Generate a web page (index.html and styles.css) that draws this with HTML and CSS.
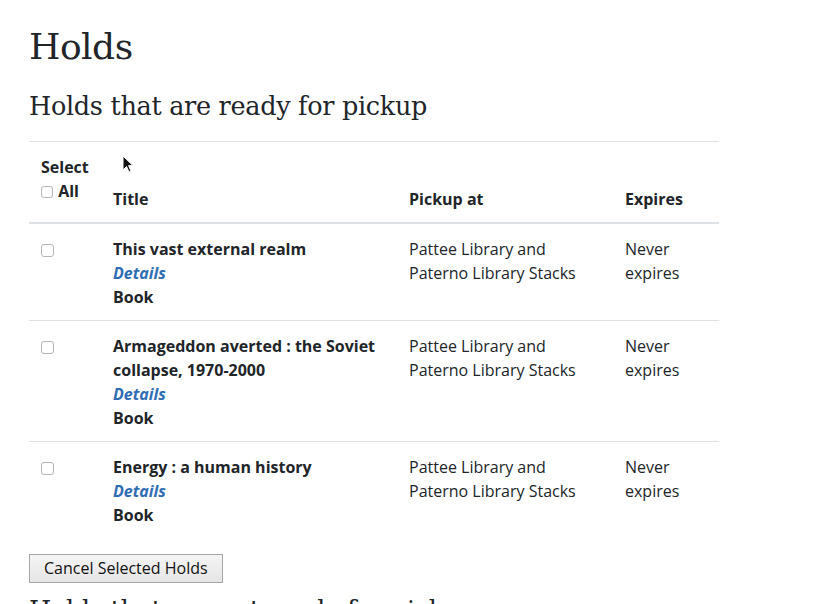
FILE: index.html
```html
<!DOCTYPE html>
<html lang="en">
<head>
<meta charset="utf-8">
<title>Holds</title>
<link rel="stylesheet" href="styles.css">
</head>
<body>
<main class="page">
  <h1 class="title">Holds</h1>
  <h2 class="subtitle">Holds that are ready for pickup</h2>
  <table class="holds">
    <colgroup>
      <col class="c-sel"><col class="c-title"><col class="c-pick"><col class="c-exp">
    </colgroup>
    <thead>
      <tr>
        <th class="th-select">Select<br><label class="all"><input type="checkbox" class="cb cb-all"> All</label></th>
        <th>Title</th>
        <th>Pickup at</th>
        <th>Expires</th>
      </tr>
    </thead>
    <tbody>
      <tr>
        <td><input type="checkbox" class="cb"></td>
        <td><strong>This vast external realm</strong><br><a class="details" href="#">Details</a><br><strong>Book</strong></td>
        <td>Pattee Library and Paterno Library Stacks</td>
        <td>Never expires</td>
      </tr>
      <tr>
        <td><input type="checkbox" class="cb"></td>
        <td><strong>Armageddon averted : the Soviet collapse, 1970-2000</strong><br><a class="details" href="#">Details</a><br><strong>Book</strong></td>
        <td>Pattee Library and Paterno Library Stacks</td>
        <td>Never expires</td>
      </tr>
      <tr>
        <td><input type="checkbox" class="cb"></td>
        <td><strong>Energy : a human history</strong><br><a class="details" href="#">Details</a><br><strong>Book</strong></td>
        <td>Pattee Library and Paterno Library Stacks</td>
        <td>Never expires</td>
      </tr>
    </tbody>
  </table>
  <button class="cancel" type="button">Cancel Selected Holds</button>
  <h2 class="subtitle next">Holds that are not ready for pickup</h2>
  <svg class="cursor" width="12" height="18" viewBox="0 0 12 18" aria-hidden="true">
    <path d="M1 1 L1 15 L4.5 11.5 L7 17 L9 16 L6.6 10.6 L11 10.6 Z" fill="#111" stroke="#fff" stroke-width="1"/>
  </svg>
</main>
</body>
</html>
```

FILE: styles.css
```css
html, body {
  margin: 0;
  padding: 0;
  background: #fff;
}
body {
  font-family: "Open Sans", "Liberation Sans", sans-serif;
  font-size: 16px;
  line-height: 24px;
  color: #212529;
}
.page {
  position: relative;
  padding: 24px 0 0 29px;
  height: 604px;
  box-sizing: border-box;
  overflow: hidden;
}
.title {
  font-family: "DejaVu Serif", "Liberation Serif", serif;
  font-weight: normal;
  font-size: 36px;
  line-height: 46px;
  margin: 0 0 20px 0;
  letter-spacing: -0.5px;
}
.subtitle {
  font-family: "DejaVu Serif", "Liberation Serif", serif;
  font-weight: normal;
  font-size: 25.5px;
  line-height: 32px;
  margin: 0 0 19px 0;
  letter-spacing: -0.3px;
}
.subtitle.next {
  margin-top: 11px;
}
.holds {
  width: 690px;
  border-collapse: collapse;
  table-layout: fixed;
  border-top: 1px solid #dee2e6;
}
.c-sel { width: 72px; }
.c-title { width: 296px; }
.c-pick { width: 216px; }
.c-exp { width: 106px; }
.holds th {
  text-align: left;
  font-weight: 700;
  vertical-align: bottom;
  padding: 13px 12px 11px 12px;
  border-bottom: 2px solid #dee2e6;
}
.holds th.th-select {
  vertical-align: top;
  padding-bottom: 19px;
}
.holds td {
  vertical-align: top;
  padding: 13px 12px 11px 12px;
  border-bottom: 1px solid #dee2e6;
}
.holds tbody tr:last-child td {
  border-bottom: none;
}
.all {
  white-space: nowrap;
}
.cb {
  -webkit-appearance: none;
  appearance: none;
  box-sizing: border-box;
  margin: 0;
  width: 13px;
  height: 13px;
  border: 1px solid #b5b5b5;
  border-radius: 3px;
  background: #fff;
  vertical-align: -1px;
}
.cb-all {
  width: 12px;
  height: 12px;
  margin-right: 1px;
}
.holds td .cb {
  margin-top: 7px;
  vertical-align: top;
}
.holds strong {
  font-weight: 700;
}
.details {
  color: #2f6db5;
  font-weight: 700;
  font-style: italic;
  text-decoration: none;
}
.cancel {
  display: block;
  margin-top: 16px;
  font-family: "Open Sans", "Liberation Sans", sans-serif;
  font-size: 16px;
  line-height: 21px;
  color: #111;
  padding: 3px 14px 3px 14px;
  background: linear-gradient(#f4f4f4, #e6e6e6);
  border: 1px solid #a6a6a6;
  border-radius: 0;
}
.cursor {
  position: absolute;
  left: 122px;
  top: 155px;
}
```
